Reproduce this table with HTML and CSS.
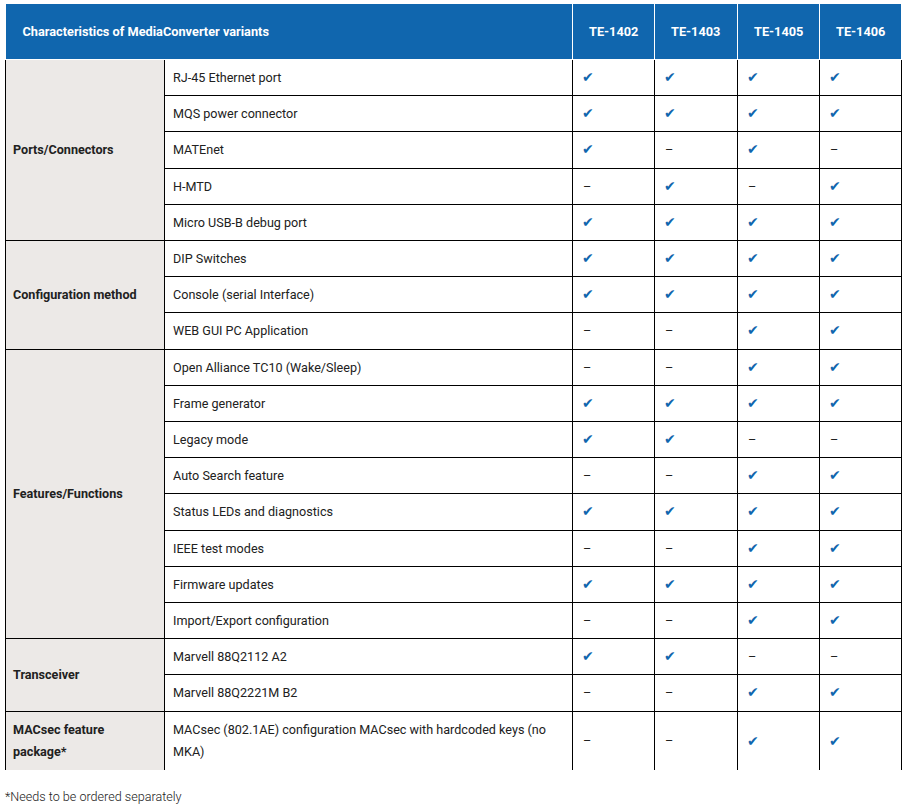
FILE: index.html
```html
<!DOCTYPE html>
<html lang="en">
<head>
<meta charset="utf-8">
<title>Characteristics of MediaConverter variants</title>
<link rel="stylesheet" href="styles.css">
</head>
<body>
<table class="variants">
  <colgroup>
    <col class="c-group">
    <col class="c-feature">
    <col class="c-variant">
    <col class="c-variant2">
    <col class="c-variant">
    <col class="c-variant">
  </colgroup>
  <thead>
    <tr>
      <th colspan="2" class="title">Characteristics of MediaConverter variants</th>
      <th>TE-1402</th>
      <th>TE-1403</th>
      <th>TE-1405</th>
      <th>TE-1406</th>
    </tr>
  </thead>
  <tbody>
    <tr><td rowspan="5" class="group">Ports/Connectors</td><td>RJ-45 Ethernet port</td><td class="y">✔</td><td class="y">✔</td><td class="y">✔</td><td class="y">✔</td></tr>
    <tr><td>MQS power connector</td><td class="y">✔</td><td class="y">✔</td><td class="y">✔</td><td class="y">✔</td></tr>
    <tr><td>MATEnet</td><td class="y">✔</td><td class="n">–</td><td class="y">✔</td><td class="n">–</td></tr>
    <tr><td>H-MTD</td><td class="n">–</td><td class="y">✔</td><td class="n">–</td><td class="y">✔</td></tr>
    <tr><td>Micro USB-B debug port</td><td class="y">✔</td><td class="y">✔</td><td class="y">✔</td><td class="y">✔</td></tr>

    <tr><td rowspan="3" class="group">Configuration method</td><td>DIP Switches</td><td class="y">✔</td><td class="y">✔</td><td class="y">✔</td><td class="y">✔</td></tr>
    <tr><td>Console (serial Interface)</td><td class="y">✔</td><td class="y">✔</td><td class="y">✔</td><td class="y">✔</td></tr>
    <tr><td>WEB GUI PC Application</td><td class="n">–</td><td class="n">–</td><td class="y">✔</td><td class="y">✔</td></tr>

    <tr><td rowspan="8" class="group">Features/Functions</td><td>Open Alliance TC10 (Wake/Sleep)</td><td class="n">–</td><td class="n">–</td><td class="y">✔</td><td class="y">✔</td></tr>
    <tr><td>Frame generator</td><td class="y">✔</td><td class="y">✔</td><td class="y">✔</td><td class="y">✔</td></tr>
    <tr><td>Legacy mode</td><td class="y">✔</td><td class="y">✔</td><td class="n">–</td><td class="n">–</td></tr>
    <tr><td>Auto Search feature</td><td class="n">–</td><td class="n">–</td><td class="y">✔</td><td class="y">✔</td></tr>
    <tr><td>Status LEDs and diagnostics</td><td class="y">✔</td><td class="y">✔</td><td class="y">✔</td><td class="y">✔</td></tr>
    <tr><td>IEEE test modes</td><td class="n">–</td><td class="n">–</td><td class="y">✔</td><td class="y">✔</td></tr>
    <tr><td>Firmware updates</td><td class="y">✔</td><td class="y">✔</td><td class="y">✔</td><td class="y">✔</td></tr>
    <tr><td>Import/Export configuration</td><td class="n">–</td><td class="n">–</td><td class="y">✔</td><td class="y">✔</td></tr>

    <tr><td rowspan="2" class="group">Transceiver</td><td>Marvell 88Q2112 A2</td><td class="y">✔</td><td class="y">✔</td><td class="n">–</td><td class="n">–</td></tr>
    <tr><td>Marvell 88Q2221M B2</td><td class="n">–</td><td class="n">–</td><td class="y">✔</td><td class="y">✔</td></tr>

    <tr class="last"><td class="group">MACsec feature package*</td><td>MACsec (802.1AE) configuration MACsec with hardcoded keys (no MKA)</td><td class="n">–</td><td class="n">–</td><td class="y">✔</td><td class="y">✔</td></tr>
  </tbody>
</table>
<p class="note">*Needs to be ordered separately</p>
</body>
</html>
```

FILE: styles.css
```css
html, body {
  margin: 0;
  padding: 0;
  background: #ffffff;
}

body {
  padding: 4px 2px 0 5px;
  font-family: Roboto, "Liberation Sans", Arial, sans-serif;
  font-size: 12.6px;
  color: #212121;
}

.variants {
  width: 896px;
  border-collapse: collapse;
  table-layout: fixed;
}

.c-group { width: 159px; }
.c-feature { width: 408px; }
.c-variant { width: 82px; }
.c-variant2 { width: 83px; }

.variants th {
  background: #1066ae;
  color: #ffffff;
  font-weight: 700;
  font-size: 12.75px;
  text-align: left;
  white-space: nowrap;
  padding: 17px 0 16px 16px;
  line-height: 22px;
  height: 22px;
  border: 1px solid #ffffff;
  border-top: 0;
}

.variants th.title {
  padding-left: 17px;
  border-left: 0;
}

.variants td {
  padding: 7px 8px;
  line-height: 21.2px;
  vertical-align: middle;
  border: 1px solid #000000;
}

.variants tbody tr:first-child td {
  border-top-color: #1066ae;
}

.variants tr.last td {
  border-bottom: 0;
  line-height: 22px;
}

.variants td.group {
  background: #ece9e7;
  font-weight: 700;
  padding-left: 7px;
  padding-right: 16px;
  line-height: 22px;
}

.variants td.y {
  color: #1066ae;
  font-family: "DejaVu Sans", sans-serif;
  font-size: 14px;
  font-weight: 700;
  padding-left: 9px;
}

.variants td.n {
  padding-left: 10px;
}

.note {
  margin: 16px 0 0 0;
  font-weight: 300;
  font-size: 12.6px;
  line-height: 22px;
  color: #222222;
}
```
